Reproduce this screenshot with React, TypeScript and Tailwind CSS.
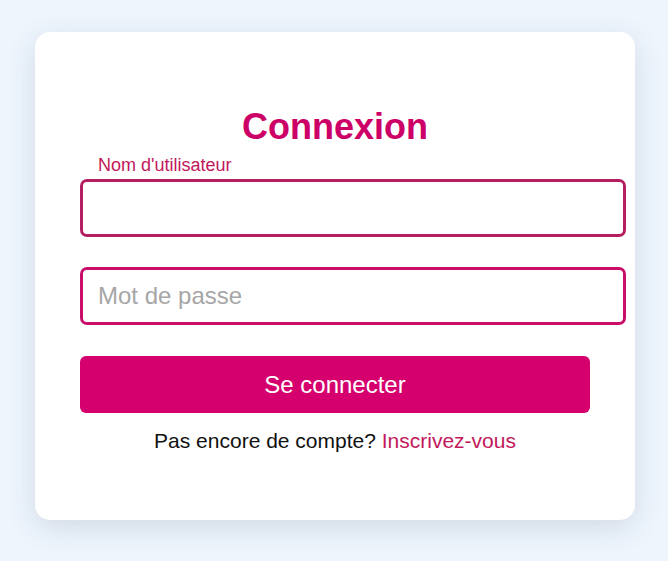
import React, { useState } from 'react';

export default function App() {
  const [username, setUsername] = useState('');
  const [password, setPassword] = useState('');

  return (
    <div className="min-h-[561px] bg-[#eef5fd] pt-[32px] pb-[42px] font-['Liberation_Sans',Arial,sans-serif]">
      <div className="ml-[35px] w-[600px] rounded-[15px] bg-white px-[45px] pt-[74px] pb-[67px] shadow-[0_8px_30px_rgba(40,60,90,0.14)]">
        <h1 className="text-center text-[36px] leading-[41px] font-bold text-[#cc0066]">Connexion</h1>

        <form onSubmit={(e) => e.preventDefault()}>
          {/* Username, label floated above */}
          <div className="relative mt-[32px]">
            <label className="absolute left-[18px] top-[-24px] text-[18px] leading-[21px] text-[#c2185b]">
              Nom d'utilisateur
            </label>
            <input
              type="text"
              value={username}
              onChange={(e) => setUsername(e.target.value)}
              className="box-content block w-full h-[28px] px-[15px] py-[12px] border-[3px] border-[#b51f61] rounded-[7px] text-[24px] outline-none"
            />
          </div>

          <div className="mt-[30px]">
            <input
              type="password"
              placeholder="Mot de passe"
              value={password}
              onChange={(e) => setPassword(e.target.value)}
              className="box-content block w-full h-[28px] px-[15px] py-[12px] border-[3px] border-[#c8106a] rounded-[7px] text-[24px] outline-none placeholder:text-[#a6a6a6]"
            />
          </div>

          <button
            type="submit"
            className="mt-[31px] block w-full h-[57px] rounded-[6px] bg-[#d5006d] text-[24px] leading-[28px] text-white"
          >
            Se connecter
          </button>
        </form>

        <p className="mt-[16px] text-center text-[21px] leading-[24px] text-[#111]">
          Pas encore de compte? <a href="#" className="text-[#c2185b]">Inscrivez-vous</a>
        </p>
      </div>
    </div>
  );
}
